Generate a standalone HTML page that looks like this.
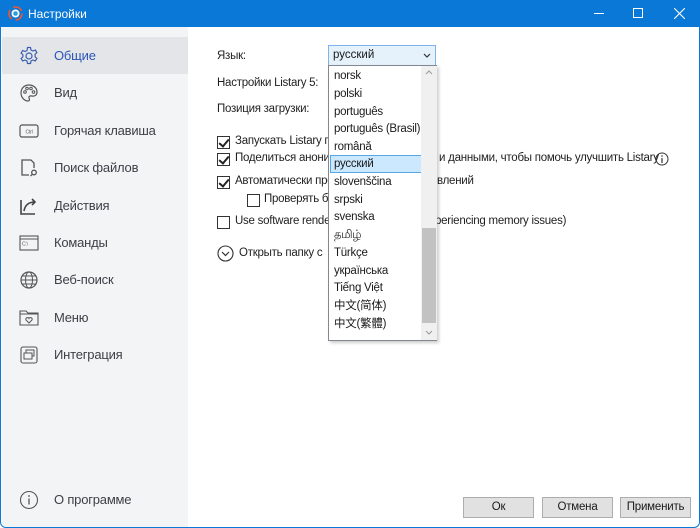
<!DOCTYPE html>
<html><head><meta charset="utf-8"><style>
*{box-sizing:border-box;margin:0;padding:0}
body{width:700px;height:528px;overflow:hidden;background:#fff;font-family:"Liberation Sans","Noto Sans CJK SC",sans-serif;font-size:12px;color:#1a1a1a;position:relative}
.win{position:absolute;left:0;top:0;width:700px;height:528px;border:1px solid #0a78d7;border-top:none;border-radius:0 0 6px 6px;overflow:hidden}
.title{position:absolute;left:0;top:0;width:700px;height:27px;background:#0a78d7;color:#fff;font-size:12px}
.title span{position:absolute;left:27px;top:7px}
.side{position:absolute;left:1px;top:27px;width:186px;height:500px;background:#f3f4f6}
.item{position:absolute;left:0;width:186px;height:37px;color:#3c4046;font-size:13px;letter-spacing:-0.2px}
.item .t{position:absolute;left:52px;top:11px}
.item svg{position:absolute;left:17px;top:9px}
.sel{background:#e4e5e8}
.sel .t{color:#2b56b8}
.a{position:absolute;white-space:nowrap;font-size:11.5px;letter-spacing:-0.25px;color:#1f1f1f}
.cb{position:absolute;width:13px;height:13px;border:1px solid #333;background:#fff}
.cb.c::after{content:"";position:absolute;left:3px;top:0px;width:4px;height:8px;border:solid #222;border-width:0 2px 2px 0;transform:rotate(40deg)}
.dd{position:absolute;left:327px;top:45px;width:108px;height:21px;border:1px solid #7eb4ea;background:#e5f1fb;font-size:11.5px}
.list{position:absolute;left:327px;top:65px;width:109px;height:276px;border:1px solid #828790;background:#fff;box-shadow:2px 2px 3px rgba(0,0,0,.2)}
.li{position:absolute;left:1px;width:92px;height:18px;padding-left:4px;line-height:18px;font-size:11.5px;letter-spacing:-0.25px;white-space:nowrap}
.li.s{background:#cce8ff;border:1px solid #56a7e8;line-height:16px;padding-left:3px}
.btn{position:absolute;top:497px;width:71px;height:21px;border:1px solid #adadad;background:#e1e1e1;text-align:center;line-height:19px;font-size:11.5px;letter-spacing:-0.2px}
</style></head><body>
<div class="win">
<div class="title">
<svg style="position:absolute;left:7px;top:6px" width="15" height="15" viewBox="0 0 15 15"><circle cx="7.5" cy="7.5" r="6.5" fill="none" stroke="#e53" stroke-width="1.6" stroke-dasharray="10 4"/><circle cx="7.5" cy="7.5" r="4" fill="#fff"/><circle cx="7.5" cy="7.5" r="2.3" fill="#2a9de0"/></svg>
<span>Настройки</span>
<div style="position:absolute;left:593px;top:13px;width:10px;height:1px;background:#fff"></div>
<div style="position:absolute;left:632px;top:8px;width:10px;height:10px;border:1px solid #fff"></div>
<svg style="position:absolute;left:673px;top:8px" width="11" height="11"><path d="M0 0L11 11M11 0L0 11" stroke="#fff" stroke-width="1.1"/></svg>
</div>
<div class="side">
<div class="item sel" style="top:10px"><svg width="20" height="20" viewBox="0 0 20 20"><circle cx="10" cy="10" r="3" fill="none" stroke="#3a5fb0" stroke-width="1.2"/><path d="M8.5 1.5h3l.5 2.5 2 1 2.3-1 1.6 2.5-1.8 1.7v2.6l1.8 1.7-1.6 2.5-2.3-1-2 1-.5 2.5h-3l-.5-2.5-2-1-2.3 1-1.6-2.5 1.8-1.7V8.7L2.1 7l1.6-2.5 2.3 1 2-1z" fill="none" stroke="#3a5fb0" stroke-width="1.2"/></svg><span class="t">Общие</span></div>
<div class="item" style="top:47px"><svg width="20" height="20" viewBox="0 0 20 20"><path d="M10 2C5 2 2 5.5 2 10s3.5 8 7 8c2 0 1.5-2 1-3-.5-1.5 1-2.5 3-2 3 .5 5-1 5-4 0-4-3.5-7-8-7z" fill="none" stroke="#555" stroke-width="1.2"/><circle cx="6" cy="9" r="1.3" fill="none" stroke="#555"/><circle cx="8" cy="5.5" r="1.3" fill="none" stroke="#555"/><circle cx="12" cy="5.5" r="1.3" fill="none" stroke="#555"/><circle cx="14.5" cy="9" r="1.3" fill="none" stroke="#555"/></svg><span class="t">Вид</span></div>
<div class="item" style="top:85px"><svg width="20" height="20" viewBox="0 0 20 20"><rect x="1" y="4" width="18" height="12" rx="2" fill="none" stroke="#555" stroke-width="1.2"/><text x="10" y="12.5" font-size="5" text-anchor="middle" fill="#555" font-family="Liberation Sans">Ctrl</text></svg><span class="t">Горячая клавиша</span></div>
<div class="item" style="top:122px"><svg width="20" height="20" viewBox="0 0 20 20"><path d="M10 17H3V2h9l3 3v5" fill="none" stroke="#555" stroke-width="1.3"/><circle cx="15" cy="14.5" r="2.3" fill="none" stroke="#555" stroke-width="1.3"/><path d="M13.3 16.3L11.5 18" stroke="#555" stroke-width="1.3"/></svg><span class="t">Поиск файлов</span></div>
<div class="item" style="top:160px"><svg width="20" height="20" viewBox="0 0 20 20"><path d="M2 4v14h14" fill="none" stroke="#444" stroke-width="1.6"/><path d="M5 15c1-6 5-9 11-9M13 3l3 3-3 3" fill="none" stroke="#444" stroke-width="1.6"/></svg><span class="t">Действия</span></div>
<div class="item" style="top:197px"><svg width="20" height="20" viewBox="0 0 20 20"><rect x="1" y="3" width="18" height="14" fill="none" stroke="#555" stroke-width="1.1"/><path d="M1 6h18" stroke="#555"/><text x="3" y="12.5" font-size="5" fill="#555" font-family="Liberation Sans">C:\</text></svg><span class="t">Команды</span></div>
<div class="item" style="top:234px"><svg width="20" height="20" viewBox="0 0 20 20"><circle cx="10" cy="10" r="8" fill="none" stroke="#555" stroke-width="1.2"/><ellipse cx="10" cy="10" rx="3.5" ry="8" fill="none" stroke="#555"/><path d="M2 10h16M3 6h14M3 14h14" stroke="#555"/></svg><span class="t">Веб-поиск</span></div>
<div class="item" style="top:272px"><svg width="20" height="20" viewBox="0 0 20 20"><path d="M1 3h6l2 2h10v12H1z M1 6h18" fill="none" stroke="#555" stroke-width="1.1"/><path d="M10 15l-3-3a1.5 1.5 0 0 1 3-1.5 1.5 1.5 0 0 1 3 1.5z" fill="none" stroke="#555"/></svg><span class="t">Меню</span></div>
<div class="item" style="top:309px"><svg width="20" height="20" viewBox="0 0 20 20"><rect x="2" y="2" width="16" height="16" rx="2" fill="none" stroke="#555" stroke-width="1.1"/><rect x="5" y="8" width="8" height="6" fill="none" stroke="#555"/><path d="M7 8V5h8v6h-2" fill="none" stroke="#555"/></svg><span class="t">Интеграция</span></div>
<div class="item" style="top:454px"><svg width="20" height="20" viewBox="0 0 20 20"><circle cx="10" cy="10" r="8.5" fill="none" stroke="#555" stroke-width="1.1"/><path d="M10 8.5v6" stroke="#555" stroke-width="1.3"/><circle cx="10" cy="6" r=".9" fill="#555"/></svg><span class="t">О программе</span></div>
</div>
<div class="a" style="left:216px;top:50px">Язык:</div>
<div class="a" style="left:216px;top:77px">Настройки Listary 5:</div>
<div class="a" style="left:216px;top:103px">Позиция загрузки:</div>
<div class="cb c" style="left:216px;top:136px"></div><div class="a" style="left:234px;top:135px">Запускать Listary пр</div>
<div class="cb c" style="left:216px;top:153px"></div><div class="a" style="left:234px;top:152px">Поделиться аноним</div><div class="a" style="left:438px;top:152px">и данными, чтобы помочь улучшить Listary</div>
<svg style="position:absolute;left:654px;top:152px" width="14" height="14"><circle cx="7" cy="7" r="6" fill="none" stroke="#333"/><path d="M7 6v5" stroke="#333" stroke-width="1.2"/><circle cx="7" cy="4" r=".8" fill="#333"/></svg>
<div class="cb c" style="left:216px;top:176px"></div><div class="a" style="left:234px;top:175px">Автоматически про</div><div class="a" style="left:436px;top:175px">влений</div>
<div class="cb" style="left:246px;top:194px"></div><div class="a" style="left:263px;top:193px">Проверять бе</div>
<div class="cb" style="left:216px;top:216px"></div><div class="a" style="left:234px;top:215px">Use software rende</div><div class="a" style="left:434px;top:215px">periencing memory issues)</div>
<svg style="position:absolute;left:216px;top:245px" width="17" height="17"><circle cx="8.5" cy="8.5" r="7.5" fill="none" stroke="#333" stroke-width="1.1"/><path d="M5 7l3.5 3.5L12 7" fill="none" stroke="#333" stroke-width="1.2"/></svg>
<div class="a" style="left:238px;top:247px">Открыть папку с</div>
<div class="dd"><span style="position:absolute;left:4px;top:3px">русский</span><svg style="position:absolute;left:94px;top:7px" width="8" height="5"><path d="M1 1l3 3 3-3" fill="none" stroke="#333" stroke-width="1.2"/></svg></div>
<div class="list">
<div class="li" style="top:1px">norsk</div>
<div class="li" style="top:19px">polski</div>
<div class="li" style="top:37px">português</div>
<div class="li" style="top:54px;width:110px">português (Brasil)</div>
<div class="li" style="top:72px">română</div>
<div class="li s" style="top:89px">русский</div>
<div class="li" style="top:107px">slovenščina</div>
<div class="li" style="top:125px">srpski</div>
<div class="li" style="top:142px">svenska</div>
<div class="li" style="top:160px">தமிழ்</div>
<div class="li" style="top:178px">Türkçe</div>
<div class="li" style="top:196px">українська</div>
<div class="li" style="top:213px">Tiếng Việt</div>
<div class="li" style="top:231px">中文(简体)</div>
<div class="li" style="top:249px">中文(繁體)</div>
<div style="position:absolute;left:92px;top:0;width:16px;height:274px;background:#f0f0f0"></div>
<div style="position:absolute;left:93px;top:162px;width:14px;height:95px;background:#c2c2c2"></div>
<svg style="position:absolute;left:96px;top:4px" width="8" height="5"><path d="M1 4l3-3 3 3" fill="none" stroke="#999"/></svg>
<svg style="position:absolute;left:96px;top:264px" width="8" height="5"><path d="M1 1l3 3 3-3" fill="none" stroke="#999"/></svg>
</div>
<div class="btn" style="left:462px">Ок</div>
<div class="btn" style="left:541px">Отмена</div>
<div class="btn" style="left:619px">Применить</div>
</div>
</body></html>
